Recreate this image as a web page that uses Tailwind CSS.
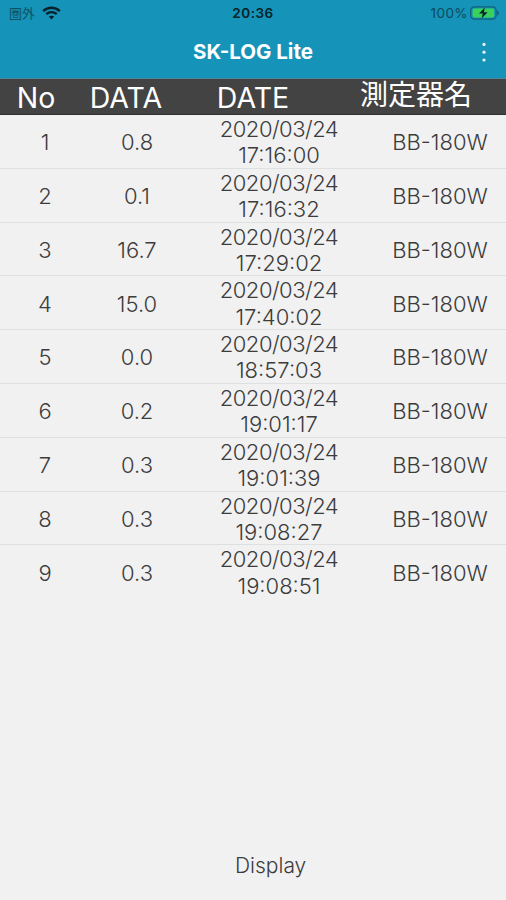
<!DOCTYPE html>
<html lang="ja">
<head>
  <meta charset="UTF-8">
  <meta name="viewport" content="width=device-width, initial-scale=1.0">
  <title>SK-LOG Lite</title>
  <script src="https://cdn.jsdelivr.net/npm/@tailwindcss/browser@4"></script>
</head>
<body class="flex h-[900px] w-[506px] flex-col overflow-hidden bg-[#f1f1f1] font-['Inter','Noto_Sans_CJK_JP',sans-serif] text-[#3c3c3c]">
  <!-- Status bar + title -->
  <header class="h-[79px] shrink-0 border-b border-[#4f8797] bg-[#1593b8]">
    <div class="grid h-[26px] grid-cols-3 items-center pr-[6px] pl-[9px] text-[#0b3440]">
      <div class="flex items-center gap-[7px]">
        <span class="text-[13px] leading-[26px] text-[#0f5266]">圏外</span>
        <svg class="h-[14px] w-[19px]" viewBox="0 0 19 14" fill="none" stroke="#06222b" stroke-width="2.4">
          <path d="M1.2 5.1C5.8.6 13.2.6 17.8 5.1"/>
          <path d="M4.3 8.2c2.9-2.8 7.5-2.8 10.4 0"/>
          <path d="M9.5 13.4 6.8 10.6c1.5-1.3 3.9-1.3 5.4 0z" fill="#06222b" stroke="none"/>
        </svg>
      </div>
      <span class="-ml-[3px] text-center text-[13.5px] font-semibold tracking-[0.5px] text-[#06222b]">20:36</span>
      <div class="flex items-center justify-end gap-[2px]">
        <span class="text-[13.5px] tracking-[0.4px] text-[#0d4b5e]">100%</span>
        <svg class="h-[14px] w-[30px]" viewBox="0 0 30 14">
          <rect x=".7" y=".8" width="25.4" height="12.4" rx="3.6" fill="none" stroke="#0f6079" stroke-width="1.2"/>
          <rect x="2.6" y="2.6" width="21.6" height="8.8" rx="1.8" fill="#3ad15b"/>
          <path d="M27.2 4.4c2.2.6 2.2 4.6 0 5.2z" fill="#0f6079"/>
          <path d="M14.9 1.6 9 7.6h3.8l-1.2 4.8 6-6.2h-3.8z" fill="#06222b"/>
        </svg>
      </div>
    </div>
    <div class="grid h-[52px] grid-cols-[1fr_auto_1fr] items-center">
      <span></span>
      <h1 class="text-[20.5px] font-bold text-white">SK-LOG Lite</h1>
      <svg class="mr-[19px] h-5 w-[6px] justify-self-end" viewBox="0 0 6 20" fill="#e6f5f9">
        <circle cx="3" cy="2.4" r="1.6"/>
        <circle cx="3" cy="10.2" r="1.6"/>
        <circle cx="3" cy="18" r="1.6"/>
      </svg>
    </div>
  </header>

  <!-- Column titles -->
  <div class="grid h-[36px] shrink-0 grid-cols-[72px_108px_146px_180px] border-b border-[#2f2f2f] bg-[#434343] text-center text-[28.5px] leading-[37px] text-white">
    <span>No</span>
    <span>DATA</span>
    <span>DATE</span>
    <span class="text-[28px] leading-[32px]">測定器名</span>
  </div>

  <!-- Log rows -->
  <main class="grow text-center text-[22px] leading-[26.3px] font-[350]">
    <div class="grid h-[53.8px] grid-cols-[90px_94px_190px_132px] items-center border-b border-[#dde1e2] pt-px">
      <span>1</span><span>0.8</span><span><span class="tracking-[-0.5px]">2020/03/24</span><br>17:16:00</span><span>BB-180W</span>
    </div>
    <div class="grid h-[53.8px] grid-cols-[90px_94px_190px_132px] items-center border-b border-[#dde1e2] pt-px">
      <span>2</span><span>0.1</span><span><span class="tracking-[-0.5px]">2020/03/24</span><br>17:16:32</span><span>BB-180W</span>
    </div>
    <div class="grid h-[53.8px] grid-cols-[90px_94px_190px_132px] items-center border-b border-[#dde1e2] pt-px">
      <span>3</span><span>16.7</span><span><span class="tracking-[-0.5px]">2020/03/24</span><br>17:29:02</span><span>BB-180W</span>
    </div>
    <div class="grid h-[53.8px] grid-cols-[90px_94px_190px_132px] items-center border-b border-[#dde1e2] pt-px">
      <span>4</span><span>15.0</span><span><span class="tracking-[-0.5px]">2020/03/24</span><br>17:40:02</span><span>BB-180W</span>
    </div>
    <div class="grid h-[53.8px] grid-cols-[90px_94px_190px_132px] items-center border-b border-[#dde1e2] pt-px">
      <span>5</span><span>0.0</span><span><span class="tracking-[-0.5px]">2020/03/24</span><br>18:57:03</span><span>BB-180W</span>
    </div>
    <div class="grid h-[53.8px] grid-cols-[90px_94px_190px_132px] items-center border-b border-[#dde1e2] pt-px">
      <span>6</span><span>0.2</span><span><span class="tracking-[-0.5px]">2020/03/24</span><br>19:01:17</span><span>BB-180W</span>
    </div>
    <div class="grid h-[53.8px] grid-cols-[90px_94px_190px_132px] items-center border-b border-[#dde1e2] pt-px">
      <span>7</span><span>0.3</span><span><span class="tracking-[-0.5px]">2020/03/24</span><br>19:01:39</span><span>BB-180W</span>
    </div>
    <div class="grid h-[53.8px] grid-cols-[90px_94px_190px_132px] items-center border-b border-[#dde1e2] pt-px">
      <span>8</span><span>0.3</span><span><span class="tracking-[-0.5px]">2020/03/24</span><br>19:08:27</span><span>BB-180W</span>
    </div>
    <div class="grid h-[53.8px] grid-cols-[90px_94px_190px_132px] items-center pt-px">
      <span>9</span><span>0.3</span><span><span class="tracking-[-0.5px]">2020/03/24</span><br>19:08:51</span><span>BB-180W</span>
    </div>
  </main>

  <!-- Bottom toolbar -->
  <footer class="flex h-[68px] shrink-0 items-center pl-[235px]">
    <button class="text-[21px] font-[350]">Display</button>
  </footer>
</body>
</html>
